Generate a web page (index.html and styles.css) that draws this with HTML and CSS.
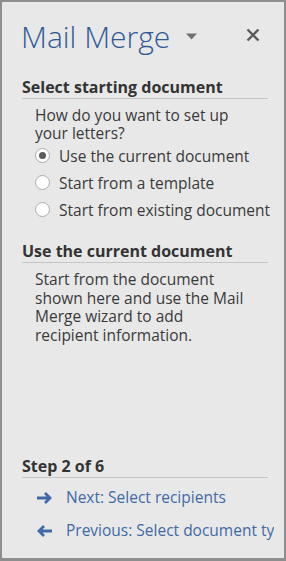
FILE: index.html
```html
<!DOCTYPE html>
<html lang="en">
<head>
    <meta charset="UTF-8">
    <title>Mail Merge</title>
    <link rel="stylesheet" href="styles.css">
</head>
<body>
    <div class="panel">
        <div class="panel-header">
            <h1 class="panel-title">Mail Merge</h1>
            <span class="panel-menu">
                <svg width="11" height="7" viewBox="0 0 11 7"><path d="M0 0.5 L11 0.5 L5.5 6.5 Z" fill="#707070"/></svg>
            </span>
            <span class="panel-close">
                <svg width="14" height="14" viewBox="0 0 14 14"><path d="M1.5 1.5 L12.5 12.5 M12.5 1.5 L1.5 12.5" stroke="#5a5a5a" stroke-width="2.4"/></svg>
            </span>
        </div>

        <div class="section">
            <h2 class="section-title">Select starting document</h2>
            <p class="section-text">How do you want to set up your letters?</p>
            <ul class="options">
                <li class="option checked"><span class="radio"></span>Use the current document</li>
                <li class="option"><span class="radio"></span>Start from a template</li>
                <li class="option"><span class="radio"></span>Start from existing document</li>
            </ul>
        </div>

        <div class="section">
            <h2 class="section-title">Use the current document</h2>
            <p class="section-text">Start from the document shown here and use the Mail Merge wizard to add recipient&nbsp;information.</p>
        </div>

        <div class="spacer"></div>

        <div class="section steps">
            <h2 class="section-title">Step 2 of 6</h2>
            <a class="step-link" href="#">
                <svg width="17" height="14" viewBox="0 0 17 14"><path d="M1 7 H14 M9 2 L14 7 L9 12" fill="none" stroke="#3f6aa6" stroke-width="2.8"/></svg>
                Next: Select recipients
            </a>
            <a class="step-link" href="#">
                <svg width="17" height="14" viewBox="0 0 17 14"><path d="M16 7 H3 M8 2 L3 7 L8 12" fill="none" stroke="#3f6aa6" stroke-width="2.8"/></svg>
                Previous: Select document type
            </a>
        </div>
    </div>
</body>
</html>
```

FILE: styles.css
```css
body {
    margin: 0;
    font-family: 'Open Sans', 'Liberation Sans', sans-serif;
    background: #e8e8e8;
}

.panel {
    width: 286px;
    height: 561px;
    box-sizing: border-box;
    border: 2px solid #8e8e8e;
    border-bottom-width: 3px;
    background: #e8e8e8;
    padding: 0 16px 0 20px;
    display: flex;
    flex-direction: column;
    overflow: hidden;
}

.panel-header {
    display: flex;
    align-items: center;
    height: 75px;
    flex-shrink: 0;
}

.panel-title {
    margin: 0 0 0 -1px;
    font-size: 30px;
    font-weight: 300;
    line-height: 36px;
    color: #2f5a96;
    position: relative;
    top: -3px;
}

.panel-menu {
    display: flex;
    margin-left: 16px;
    margin-top: -7px;
}

.panel-close {
    display: flex;
    margin-left: auto;
    margin-right: 8px;
    margin-top: -9px;
}

.section-title {
    margin: 0;
    font-size: 16px;
    font-weight: bold;
    color: #333;
    line-height: 20px;
    border-bottom: 1px solid #c6c6c6;
    padding-bottom: 1px;
}

.section-text {
    margin: 7px 11px 0 13px;
    font-size: 15.5px;
    line-height: 18px;
    color: #3a3a3a;
}

.options {
    list-style: none;
    margin: 0 0 0 13px;
    padding: 0;
}

.option {
    display: flex;
    align-items: center;
    height: 27px;
    font-size: 15.5px;
    color: #3a3a3a;
    white-space: nowrap;
}

.radio {
    width: 15px;
    height: 15px;
    flex-shrink: 0;
    border: 1px solid #ababab;
    border-radius: 50%;
    background: #fff;
    margin-right: 9px;
    box-sizing: border-box;
    display: flex;
    align-items: center;
    justify-content: center;
}

.option.checked .radio::after {
    content: "";
    width: 7px;
    height: 7px;
    border-radius: 50%;
    background: #5a5a5a;
}

.section + .section {
    margin-top: 18px;
}

.section:nth-of-type(3) .section-text {
    line-height: 18.5px;
}

.spacer {
    flex: 1;
}

.steps {
    padding-bottom: 15px;
}

.step-link {
    display: flex;
    align-items: center;
    gap: 13px;
    margin: 7px -6px 0 14px;
    font-size: 15.5px;
    color: #3f6aa6;
    text-decoration: none;
    white-space: nowrap;
    line-height: 25px;
    overflow: hidden;
}

.step-link + .step-link {
    margin-top: 8px;
}

.step-link svg {
    flex-shrink: 0;
}
```
